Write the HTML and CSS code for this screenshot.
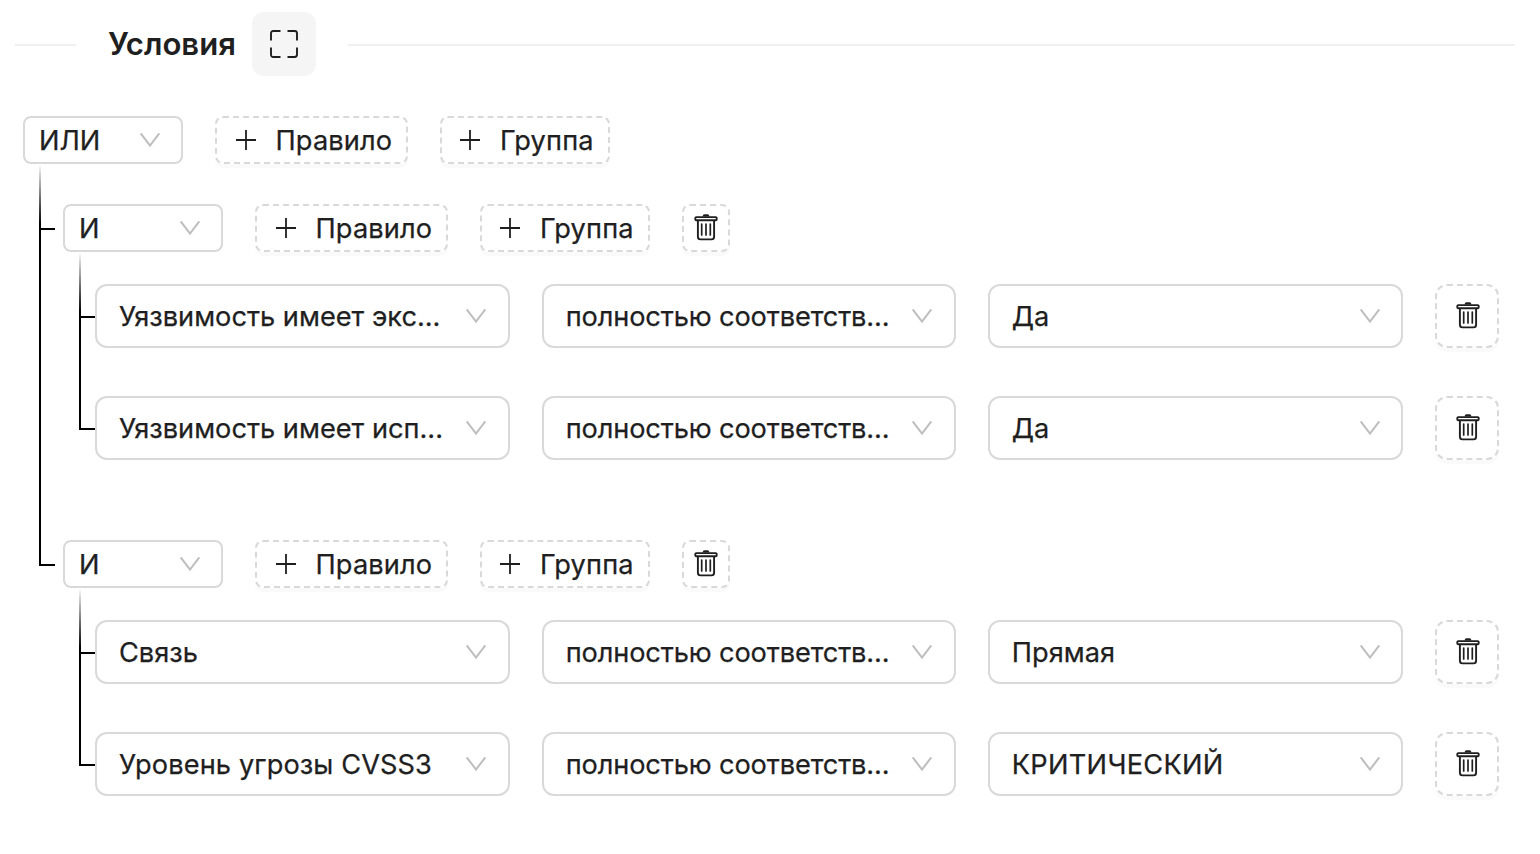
FILE: index.html
```html
<!DOCTYPE html>
<html lang="ru">
<head>
<meta charset="utf-8">
<title>Условия</title>
<link rel="stylesheet" href="styles.css">
</head>
<body>
<svg class="sprite" width="0" height="0">
  <symbol id="plus" viewBox="0 0 28 28"><path d="M14 4v20M4 14h20" fill="none" stroke="currentColor" stroke-width="1.8"/></symbol>
  <symbol id="down" viewBox="0 0 24 24"><path d="M2.7 5.3L12 17.6L21.3 5.3" fill="none" stroke="currentColor" stroke-width="2.1"/></symbol>
  <symbol id="trash" viewBox="0 0 28 28"><rect x="3.3" y="3.1" width="21.4" height="3.2" rx="1" fill="none" stroke="currentColor" stroke-width="1.9"/><path d="M5.9 6.6v16.2q0 2.6 2.6 2.6h11q2.6 0 2.6-2.6V6.6" fill="none" stroke="currentColor" stroke-width="1.9"/><path d="M9.7 10v11M14 10v11M18.3 10v11" stroke="currentColor" stroke-width="1.7" stroke-linecap="round"/><path d="M10.6 2.6q0-2.4 2-2.4h2.8q2 0 2 2.4z" fill="currentColor"/></symbol>
  <symbol id="expand" viewBox="0 0 28 28"><path d="M1 10.5V3.4q0-2.4 2.4-2.4h7.1M17.5 1h7.1q2.4 0 2.4 2.4v7.1M27 17.5v7.1q0 2.4-2.4 2.4h-7.1M10.5 27H3.4q-2.4 0-2.4-2.4v-7.1" fill="none" stroke="currentColor" stroke-width="1.9"/></symbol>
</svg>
<main class="page">
  <header class="divider">
    <span class="line line-start"></span>
    <h1 class="title">Условия</h1>
    <button class="expand"><svg class="icon"><use href="#expand"/></svg></button>
    <span class="line line-end"></span>
  </header>

  <section class="tree">
    <div class="actions">
      <div class="select small"><span class="value">ИЛИ</span><svg class="arrow"><use href="#down"/></svg></div>
      <button class="add rule-btn"><svg class="icon"><use href="#plus"/></svg><span class="label">Правило</span></button>
      <button class="add group-btn"><svg class="icon"><use href="#plus"/></svg><span class="label">Группа</span></button>
    </div>
    <ul class="groups">
      <li class="node">
        <div class="rail"><span class="elbow"></span><span class="stem"></span></div>
        <div class="body">
          <div class="actions">
            <div class="select small"><span class="value">И</span><svg class="arrow"><use href="#down"/></svg></div>
            <button class="add rule-btn"><svg class="icon"><use href="#plus"/></svg><span class="label">Правило</span></button>
            <button class="add group-btn"><svg class="icon"><use href="#plus"/></svg><span class="label">Группа</span></button>
            <button class="remove small"><svg class="icon"><use href="#trash"/></svg></button>
          </div>
          <ul class="rules">
            <li class="node">
              <div class="rail"><span class="elbow"></span><span class="stem"></span></div>
              <div class="body rule">
                <div class="select"><span class="value">Уязвимость имеет экс...</span><svg class="arrow"><use href="#down"/></svg></div>
                <div class="select"><span class="value t-match">полностью соответств...</span><svg class="arrow"><use href="#down"/></svg></div>
                <div class="select last"><span class="value">Да</span><svg class="arrow"><use href="#down"/></svg></div>
                <button class="remove"><svg class="icon"><use href="#trash"/></svg></button>
              </div>
            </li>
            <li class="node">
              <div class="rail"><span class="elbow"></span><span class="stem"></span></div>
              <div class="body rule">
                <div class="select"><span class="value">Уязвимость имеет исп...</span><svg class="arrow"><use href="#down"/></svg></div>
                <div class="select"><span class="value t-match">полностью соответств...</span><svg class="arrow"><use href="#down"/></svg></div>
                <div class="select last"><span class="value">Да</span><svg class="arrow"><use href="#down"/></svg></div>
                <button class="remove"><svg class="icon"><use href="#trash"/></svg></button>
              </div>
            </li>
          </ul>
        </div>
      </li>
      <li class="node">
        <div class="rail"><span class="elbow"></span><span class="stem"></span></div>
        <div class="body">
          <div class="actions">
            <div class="select small"><span class="value">И</span><svg class="arrow"><use href="#down"/></svg></div>
            <button class="add rule-btn"><svg class="icon"><use href="#plus"/></svg><span class="label">Правило</span></button>
            <button class="add group-btn"><svg class="icon"><use href="#plus"/></svg><span class="label">Группа</span></button>
            <button class="remove small"><svg class="icon"><use href="#trash"/></svg></button>
          </div>
          <ul class="rules">
            <li class="node">
              <div class="rail"><span class="elbow"></span><span class="stem"></span></div>
              <div class="body rule">
                <div class="select"><span class="value">Связь</span><svg class="arrow"><use href="#down"/></svg></div>
                <div class="select"><span class="value t-match">полностью соответств...</span><svg class="arrow"><use href="#down"/></svg></div>
                <div class="select last"><span class="value">Прямая</span><svg class="arrow"><use href="#down"/></svg></div>
                <button class="remove"><svg class="icon"><use href="#trash"/></svg></button>
              </div>
            </li>
            <li class="node">
              <div class="rail"><span class="elbow"></span><span class="stem"></span></div>
              <div class="body rule">
                <div class="select"><span class="value t-level">Уровень угрозы CVSS3</span><svg class="arrow"><use href="#down"/></svg></div>
                <div class="select"><span class="value t-match">полностью соответств...</span><svg class="arrow"><use href="#down"/></svg></div>
                <div class="select last"><span class="value t-critical">КРИТИЧЕСКИЙ</span><svg class="arrow"><use href="#down"/></svg></div>
                <button class="remove"><svg class="icon"><use href="#trash"/></svg></button>
              </div>
            </li>
          </ul>
        </div>
      </li>
    </ul>
  </section>
</main>
</body>
</html>
```
FILE: styles.css
```css
* { box-sizing: border-box; }
body {
  margin: 0;
  background: #fff;
  color: #1f1f1f;
  font: 400 27.2px/44px Inter, "Open Sans", sans-serif;
}
.sprite { display: block; }
ul { list-style: none; margin: 0; padding: 0; }
button { font: inherit; color: inherit; margin: 0; padding: 0; }
.page { height: 854px; padding: 12px 25px 0 15px; overflow: hidden; }

.divider { display: flex; align-items: center; height: 64px; }
.line { height: 2px; margin-top: 2px; background: #f0f0f0; }
.line-start { width: 61px; margin-right: 32px; }
.line-end { flex: 1; margin-left: 32px; }
.title { margin: 0; width: 144px; font-size: 31.1px; font-weight: 600; line-height: 48px; white-space: nowrap; }
.expand {
  display: flex; align-items: center; justify-content: center;
  width: 64px; height: 64px; border: 0; border-radius: 12px; background: #f5f5f5;
}
.icon { width: 28px; height: 28px; flex: none; }

.tree { padding: 40px 16px 0 8px; }
.actions { display: flex; gap: 32px; height: 48px; }

.select {
  display: flex; align-items: center; justify-content: space-between;
  min-width: 0; height: 64px; padding: 0 20px 0 22px;
  border: 2px solid #d9d9d9; border-radius: 12px; background: #fff;
}
.select.last { padding: 0 19px 0 21.5px; }
.select.small { flex: none; width: 160px; height: 48px; padding: 0 19px 0 14px; border-radius: 8px; }
.value, .label { padding-top: 1px; white-space: nowrap; -webkit-text-stroke: .25px currentColor; }
.arrow { width: 24px; height: 24px; flex: none; color: #bfbfbf; }

/* Tracking per label */
.label { letter-spacing: .15px; }
.t-match { letter-spacing: -.13px; }
.t-level { letter-spacing: .1px; }
.t-critical { letter-spacing: .28px; }

.add, .remove {
  display: flex; align-items: center; border: 2px dashed #d9d9d9;
  background: #fff; box-shadow: 0 4px 0 rgba(0, 0, 0, .02); flex: none;
}
.add { height: 48px; padding-left: 14px; gap: 16px; border-radius: 8px; white-space: nowrap; }
.rule-btn { width: 193px; padding-left: 15px; gap: 15.5px; }
.group-btn { width: 170px; }
.remove { justify-content: center; width: 64px; height: 64px; padding-left: 2px; border-radius: 12px; }
.remove.small { width: 48px; height: 48px; padding-left: 0; border-radius: 8px; }

.groups { padding-left: 16px; }
.rules { padding-left: 16px; }
.node { display: flex; --drop: 66px; --space: 32px; --ink: #000; }
.node:first-child { --ink: transparent; }
.rules > .node + .node { --drop: 82px; --space: 48px; }
.groups > .node { --space: 40px; }
.groups > .node + .node { --drop: 106px; --space: 80px; }
.rules > .node:first-child { --space: 32px; --drop: 66px; }
.rail { display: flex; flex-direction: column; flex: none; width: 16px; }
.elbow {
  height: var(--drop);
  background:
    linear-gradient(var(--ink), #000 60px) left top / 2px 100% no-repeat,
    linear-gradient(#000, #000) left bottom / 100% 2px no-repeat;
}
.stem { flex: 1; width: 2px; background: #000; }
.node:last-child > .rail > .stem { background: none; }
.body { flex: 1; min-width: 0; padding-top: var(--space); }
.groups > .node > .body { margin-left: 8px; }
.rule { display: grid; grid-template-columns: repeat(3, minmax(0, 1fr)) 64px; gap: 32px; }
```
